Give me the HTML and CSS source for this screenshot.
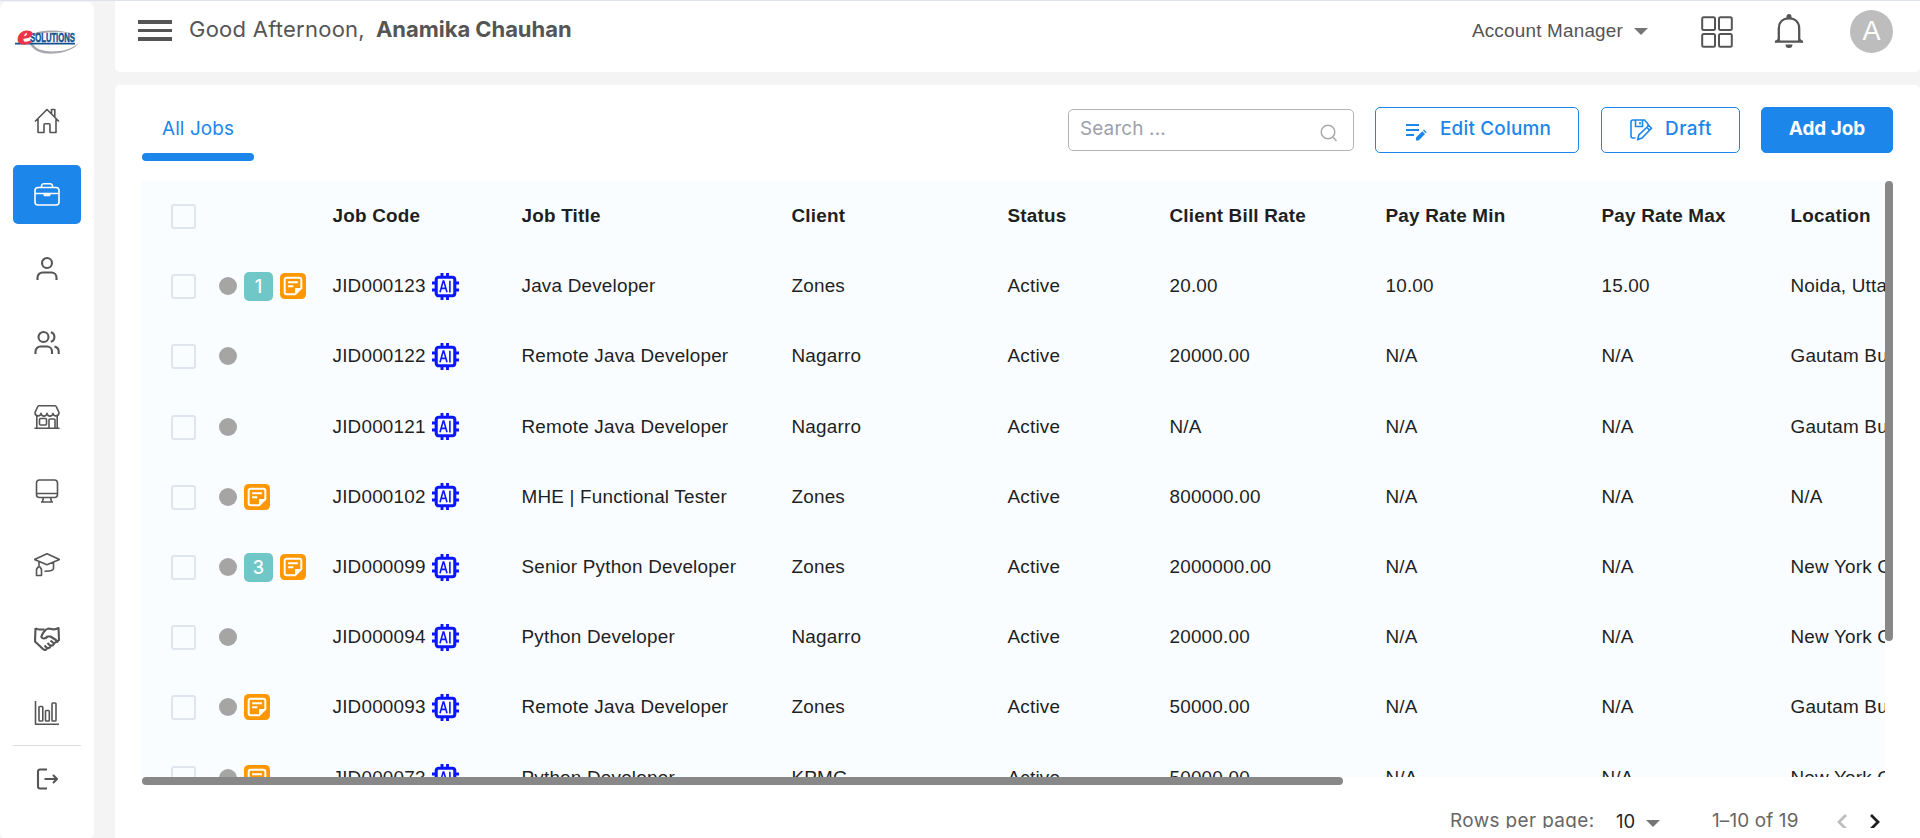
FILE: index.html
```html
<!DOCTYPE html>
<html lang="en">
<head>
<meta charset="utf-8">
<title>All Jobs</title>
<link rel="stylesheet" href="styles.css">
</head>
<body>
<svg class="sprite" aria-hidden="true">
  <symbol id="ai" viewBox="0 0 27 27">
    <path d="M10 0v5M15.500 0v5M10 22v5M15.500 22v5M0 10h5M0 17h5M22 10h5M22 17h5" stroke="#0b16ff" stroke-width="2.900" fill="none"/>
    <rect x="4.200" y="4.200" width="18.600" height="18.600" rx="2.500" fill="none" stroke="#0b16ff" stroke-width="3.100"/>
    <path d="M8 19.200L11.200 8h.6l3.200 11.200M9.100 15.400h4.800M17.900 7.800v11.600" stroke="#0b16ff" stroke-width="1.600" fill="none"/>
  </symbol>
  <symbol id="note" viewBox="0 0 25 25">
    <rect width="25" height="25" rx="4.5" fill="#ff9800"/>
    <path d="M14.5 20.5H6.5a2 2 0 0 1-2-2v-12a2 2 0 0 1 2-2h12a2 2 0 0 1 2 2v8z" fill="none" stroke="#fff" stroke-width="1.9"/>
    <path d="M14.5 20.5v-6h6z" fill="#fff"/>
    <path d="M7.8 9h9.4M7.8 12.8h5" stroke="#fff" stroke-width="1.9"/>
  </symbol>
</svg>

<div class="app">
  <aside class="sidebar">
    <svg class="logo" viewBox="0 0 66 26">
      <path d="M16 4.5C26-1 48-.5 57 4 47 .8 28 1.200 20 6zM14 12C18 23 31 24.800 42 23.300 53 22 61 17.500 64.500 12 60 17 51 21 41 21.300 30 21.800 20 20 17 12z" fill="#a6a8ae"/>
      <path d="M0 13.600h60" stroke="#14528f" stroke-width="1.600"/>
      <text x="15" y="12.300" class="logo-name" textLength="45" lengthAdjust="spacingAndGlyphs">SOLUTiONS</text>
      <text x="2.500" y="14" class="logo-e" textLength="15" lengthAdjust="spacingAndGlyphs">e</text>
    </svg>
    <nav class="menu">
      <a class="item"><svg viewBox="0 0 26 26"><path d="M1 13.500L13 1.500l12 12M4 11v13.500h6V17a1.200 1.200 0 0 1 1.200-1.200h3.600A1.200 1.200 0 0 1 16 17v7.500h6V11M17.500 5.500v-4h3.300v7.500"/></svg></a>
      <a class="item active"><svg viewBox="0 0 26 26"><rect x="1" y="5.500" width="24" height="17.500" rx="3"/><path d="M7.500 5.500V4A2.200 2.200 0 0 1 9.700 1.800h6.600A2.200 2.200 0 0 1 18.500 4v1.500M1 11.500h24"/><path d="M9.500 12h7v1a1.200 1.200 0 0 1-1.200 1.200h-4.600A1.200 1.200 0 0 1 9.500 13z" fill="#fff" stroke="none"/></svg></a>
      <a class="item bold"><svg viewBox="0 0 26 26"><circle cx="13" cy="7" r="5"/><path d="M3.500 24v-2.500a5 5 0 0 1 5-5h9a5 5 0 0 1 5 5V24"/></svg></a>
      <a class="item bold"><svg viewBox="0 0 26 26"><circle cx="9.500" cy="7" r="5"/><path d="M1.500 24v-2.500a5 5 0 0 1 5-5h6.500a5 5 0 0 1 5 5V24M16.800 2.200a5 5 0 0 1 0 9.600M20.500 16.600a5 5 0 0 1 4.200 4.900V24"/></svg></a>
      <a class="item"><svg viewBox="0 0 26 26"><path d="M5 1.800h16a1.500 1.500 0 0 1 1.400 1L25 8.500c0 4.200-5.200 4.500-6 .8-.8 3.700-5.300 3.700-6 0-.8 3.700-5.300 3.700-6 0-.8 3.700-6 3.400-6-.8l2.600-5.700a1.500 1.500 0 0 1 1.400-1zM2.800 12v12M23.200 12v12M.5 24.300h25M15 24v-8a1 1 0 0 1 1-1h4a1 1 0 0 1 1 1v8"/><rect x="5.500" y="14.500" width="7" height="6.500" rx="1"/></svg></a>
      <a class="item"><svg viewBox="0 0 26 26"><rect x="2.500" y="2" width="21" height="17.500" rx="3"/><path d="M2.500 15.500h21M9.500 19.500l-1 4M16.500 19.500l1 4M7 24h12"/></svg></a>
      <a class="item"><svg viewBox="0 0 26 26"><path d="M.5 7.500L13 1.800l12.500 5.700L13 12.700zM5 9.500v5M19.500 10.500v6c0 2-3.500 2.700-9 2.700"/><path d="M2.500 23.500v-6l1.500-2.500h2l1.500 2.500v6z"/></svg></a>
      <a class="item bold"><svg viewBox="0 0 26 26"><path d="M1.500 2c1 1.500 2.500 1.500 4 1.500h5M1.500 2L1 15.500l8.500 8c1.500 1 3.500 0 3.500-1.500 2 .5 3.500-.5 3.500-2.500 2 .5 3.500-.7 3.500-2.500 2 0 2.800-1.500 2-3l-5.500-3.500h-3c-2 2.500-5.500 2.500-6.200.5C8 8 11 3 14.500 2.500 18 2.500 19 5 24.500 2L25 14l-2.500 2.500M10.500 19.500l2.500 2.500M13.500 17l3 3M16.500 14.500l3.500 3"/></svg></a>
      <a class="item"><svg viewBox="0 0 26 26"><path d="M1.500 1v23.300h23.500"/><rect x="5" y="6.500" width="3.800" height="14.500" rx=".8"/><rect x="11.500" y="10.500" width="3.800" height="10.500" rx=".8"/><rect x="18" y="3" width="4" height="18" rx=".8"/></svg></a>
    </nav>
    <a class="exit"><svg viewBox="0 0 26 26"><path d="M13 3.500H6a2 2 0 0 0-2 2v15a2 2 0 0 0 2 2h7M10.500 13h12M19 9l4 4-4 4"/></svg></a>
  </aside>

  <main class="main">
    <header class="topbar">
      <span class="burger"></span>
      <span class="hello">Good Afternoon,</span>
      <span class="name">Anamika Chauhan</span>
      <span class="role">Account Manager</span>
      <span class="caret"></span>
      <svg class="apps" viewBox="0 0 32 32"><rect x="1.200" y="1.200" width="12.800" height="12.800" rx="1.500"/><rect x="18" y="1.200" width="12.800" height="12.800" rx="1.500"/><rect x="1.200" y="18" width="12.800" height="12.800" rx="1.500"/><rect x="18" y="18" width="12.800" height="12.800" rx="1.500"/></svg>
      <svg class="bell" viewBox="0 0 30 34"><path d="M4.800 27V14.500C4.800 8 9 4.300 15 4.300S25.200 8 25.200 14.500V27M1 27.700h28" fill="none" stroke="#555" stroke-width="2.300"/><path d="M.5 28.500l4-4.500v4zM29.500 28.500l-4-4.500v4zM12.500 4.500V2.500a2.500 2.500 0 0 1 5 0v2zM11.500 30.500h7a3.500 3.500 0 0 1-7 0z" fill="#555"/></svg>
      <span class="avatar">A</span>
    </header>

    <section class="card">
      <div class="toolbar">
        <div class="tab"><span>All Jobs</span></div>
        <div class="search"><span>Search ...</span><svg viewBox="0 0 18 18"><circle cx="8" cy="8" r="6.800"/><path d="M12.800 13l3.700 4"/></svg></div>
        <button class="btn edit"><svg viewBox="0 0 22 20"><path d="M1 3h13M1 8h13M1 13h8" stroke="#1c86ea" stroke-width="2.200"/><path d="M11 18.500v-3l6.300-6.300 2.700 2.700-6.300 6.600zM18 8.500l1-1 2.700 2.700-1 1z" fill="#1c86ea"/></svg><span>Edit Column</span></button>
        <button class="btn draft"><svg viewBox="0 0 23 22"><path d="M5.500 19H3a2 2 0 0 1-2-2V3a2 2 0 0 1 2-2h11.500l3.500 4v2M5.500 1v6.500h7V1M10 3v2.500M7.800 20.500l1-4.500 10-9.500 2.700 2.700-9.500 9.800zM17 8.500l2.700 2.700" fill="none" stroke="#1c86ea" stroke-width="1.600"/></svg><span>Draft</span></button>
        <button class="btn add"><span>Add Job</span></button>
      </div>

      <div class="table-area">
        <div class="grid" id="grid"></div>
        <div class="vtrack"><div class="vthumb"></div></div>
      </div>
      <div class="hthumb"></div>

      <footer class="pager">
        <span class="rpp">Rows per page:</span>
        <span class="size">10</span>
        <span class="caret"></span>
        <span class="range">1–10 of 19</span>
        <svg class="prev" viewBox="0 0 12 18"><path d="M10 2L3 9l7 7"/></svg>
        <svg class="next" viewBox="0 0 12 18"><path d="M2 2l7 7-7 7"/></svg>
      </footer>
    </section>
  </main>
</div>
<script src="script.js"></script>
</body>
</html>
```
FILE: styles.css
```css
* { box-sizing: border-box; }
html, body { height: 100%; }
body {
  margin: 0;
  overflow: hidden;
  background: #f4f4f4;
  border-top: 1px solid #dde1ee;
  font-family: "Liberation Sans", Arial, sans-serif;
  color: #1f1f1f;
}
.sprite { display: none; }
.app { display: flex; height: 837px; }

/* Sidebar */
.sidebar {
  width: 94px;
  height: 837px;
  flex: none;
  margin-top: 1px;
  background: #fff;
  border-radius: 7px;
  display: flex;
  flex-direction: column;
  align-items: center;
}
.logo { width: 66px; height: 26px; margin-top: 28px; margin-left: 2px; overflow: visible; }
.logo-name { font: bold 12px "Liberation Sans", sans-serif; fill: #14528f; stroke: #14528f; stroke-width: .5; }
.logo-e { font: italic bold 28px "Liberation Serif", serif; fill: #ef3346; stroke: #ef3346; stroke-width: 1; }
.menu {
  margin-top: 35px;
  display: flex;
  flex-direction: column;
  gap: 15px;
  padding-bottom: 3px;
  border-bottom: 1px solid #dcdcdc;
}
.item {
  width: 68px;
  height: 59px;
  border-radius: 5px;
  display: flex;
  align-items: center;
  justify-content: center;
}
.item svg, .exit svg { width: 26px; height: 26px; fill: none; stroke: #555; stroke-width: 1.6; stroke-linejoin: round; }
.item.bold svg, .exit svg { stroke-width: 2.1; }
.item.active { background: #1c86ea; }
.item.active svg { stroke: #fff; }
.exit { height: 26px; margin-top: 20px; }

/* Header */
.main { flex: 1; margin-left: 21px; min-width: 0; display: flex; flex-direction: column; }
.topbar {
  height: 71px;
  flex: none;
  background: #fff;
  border-radius: 0 0 5px 5px;
  display: flex;
  align-items: flex-start;
  padding: 0 27px 0 23px;
  color: #555;
}
.burger {
  width: 34px;
  height: 21px;
  margin-top: 19px;
  border-top: 4px solid #555;
  border-bottom: 4px solid #555;
  background: linear-gradient(#555, #555) center / 100% 3px no-repeat;
}
.hello, .name { font: 22px/28px Inter, sans-serif; margin-top: 14px; white-space: nowrap; }
.hello { width: 187px; margin-left: 17px; letter-spacing: .25px; }
.name { font-weight: 700; letter-spacing: -.05px; }
.role { margin: 18px 0 0 auto; font-size: 18.900px; line-height: 24px; letter-spacing: .2px; }
.caret { width: 0; height: 0; border: 7px solid transparent; border-top-color: #757575; border-bottom: 0; }
.topbar .caret { margin: 27px 0 0 11px; }
.apps { width: 32px; height: 32px; margin: 15px 0 0 53px; fill: none; stroke: #555; stroke-width: 2; }
.bell { width: 30px; height: 34px; margin: 13px 0 0 41px; }
.avatar {
  width: 43px;
  height: 43px;
  margin: 9px 0 0 46px;
  border-radius: 50%;
  background: #bdbdbd;
  color: #fff;
  font-size: 27px;
  line-height: 43px;
  text-align: center;
}

/* Jobs card */
.card {
  flex: 1;
  margin-top: 13px;
  background: #fff;
  border-radius: 5px 5px 0 0;
  padding: 22px 27px 0;
  font-family: Inter, sans-serif;
}
.toolbar { display: flex; height: 74px; align-items: flex-start; }
.tab {
  width: 112px;
  height: 54px;
  margin-right: auto;
  display: flex;
  flex-direction: column;
  justify-content: space-between;
  align-items: center;
  color: #1c86ea;
  font-size: 18.900px;
  line-height: 24px;
  padding-top: 10px;
  letter-spacing: .1px;
}
.tab::after { content: ""; width: 112px; height: 8px; border-radius: 4px; background: #1c86ea; }
.search {
  width: 286px;
  height: 42px;
  margin: 2px 21px 0 0;
  border: 1px solid #b4b4b4;
  border-radius: 5px;
  padding: 7px 15px 0 11px;
  display: flex;
  justify-content: space-between;
  color: #9ba0ab;
  font-size: 18.900px;
  line-height: 24px;
  letter-spacing: .15px;
}
.search svg { width: 18px; height: 18px; margin-top: 7px; fill: none; stroke: #aaa; stroke-width: 1.5; }
.btn {
  height: 46px;
  padding: 0;
  border: 1px solid #1c86ea;
  border-radius: 5px;
  background: #fff;
  color: #1c86ea;
  font: 500 18.900px/24px Inter, sans-serif;
  display: flex;
  align-items: flex-start;
  white-space: nowrap;
}
.btn span { margin-top: 9px; }
.edit { width: 204px; margin-right: 22px; padding-left: 29px; letter-spacing: .2px; }
.edit svg { width: 22px; height: 20px; margin: 14px 13px 0 0; }
.draft { width: 139px; margin-right: 21px; padding-left: 28px; letter-spacing: .5px; }
.draft svg { width: 23px; height: 22px; margin: 11px 12px 0 0; }
.add { width: 132px; background: #1c86ea; color: #fff; font-weight: 700; justify-content: center; }

/* Data grid */
.table-area { display: flex; height: 596px; }
.grid {
  width: 1743px;
  height: 596px;
  overflow: hidden;
  background: #f9fdff;
  font: 18.900px/24px "Liberation Sans", Arial, sans-serif;
  letter-spacing: .2px;
}
.row {
  display: grid;
  grid-template-columns: 48px 113.500px 189px 270px 216px 162px 216px 216px 189px 200px;
  height: 70.200px;
  align-items: center;
  padding-left: 29px;
  width: max-content;
  white-space: nowrap;
}
.row.head { font-weight: 700; }
.check { width: 25px; height: 25px; border: 2.500px solid #dee5ef; border-radius: 3px; margin-top: 1px; }
.flags { display: flex; align-items: center; gap: 7px; }
.dot { width: 18px; height: 18px; border-radius: 50%; background: #a5a5a3; }
.count {
  width: 29px;
  height: 29px;
  border-radius: 5px;
  background: #70c7c7;
  color: #fff;
  font: 500 18px/29px Inter, sans-serif;
  text-align: center;
}
.note { width: 26px; height: 26px; }
.code { display: flex; align-items: center; gap: 6px; }
.ai { width: 27px; height: 27px; }
.vtrack { width: 8px; }
.vthumb { height: 460px; border-radius: 4px; background: #888; }
.hthumb { width: 1201px; height: 8px; border-radius: 4px; background: #888; }

/* Pagination */
.pager {
  height: 43px;
  overflow: hidden;
  display: flex;
  align-items: flex-start;
  padding: 24px 12px 0 0;
  color: #666;
  font-size: 18.900px;
  line-height: 24px;
  white-space: nowrap;
}
.rpp { margin-left: auto; width: 166px; letter-spacing: .4px; }
.size { color: #1f1f1f; width: 30px; font-size: 18.500px; }
.pager .caret { margin-top: 11px; }
.range { margin-left: 52px; width: 124px; letter-spacing: .15px; }
.pager svg { width: 12px; height: 18px; margin-top: 4px; fill: none; stroke-width: 2.800; }
.prev { stroke: #bdbdbd; margin-right: 21px; }
.next { stroke: #1f1f1f; }
```
FILE: script.js
```js
const jobs = [
  ["JID000123", "Java Developer", "Zones", "20.00", "10.00", "15.00", "Noida, Uttar Pradesh", "1", true],
  ["JID000122", "Remote Java Developer", "Nagarro", "20000.00", "N/A", "N/A", "Gautam Buddha", "", false],
  ["JID000121", "Remote Java Developer", "Nagarro", "N/A", "N/A", "N/A", "Gautam Buddha", "", false],
  ["JID000102", "MHE | Functional Tester", "Zones", "800000.00", "N/A", "N/A", "N/A", "", true],
  ["JID000099", "Senior Python Developer", "Zones", "2000000.00", "N/A", "N/A", "New York City", "3", true],
  ["JID000094", "Python Developer", "Nagarro", "20000.00", "N/A", "N/A", "New York City", "", false],
  ["JID000093", "Remote Java Developer", "Zones", "50000.00", "N/A", "N/A", "Gautam Buddha", "", true],
  ["JID000073", "Python Developer", "KPMG", "50000.00", "N/A", "N/A", "New York City", "", true]
];
const cells = list => list.map(t => `<span>${t}</span>`).join("");
const head = `<div class="row head"><div class="check"></div><div></div>` +
  cells(["Job Code", "Job Title", "Client", "Status", "Client Bill Rate", "Pay Rate Min", "Pay Rate Max", "Location"]) + `</div>`;
const rows = jobs.map(([code, title, client, bill, min, max, place, count, note]) =>
  `<div class="row"><div class="check"></div><div class="flags"><i class="dot"></i>` +
  (count ? `<span class="count">${count}</span>` : "") +
  (note ? `<svg class="note"><use href="#note"/></svg>` : "") +
  `</div><div class="code"><span>${code}</span><svg class="ai"><use href="#ai"/></svg></div>` +
  cells([title, client, "Active", bill, min, max, place]) + `</div>`).join("");
document.getElementById("grid").innerHTML = head + rows;
```
